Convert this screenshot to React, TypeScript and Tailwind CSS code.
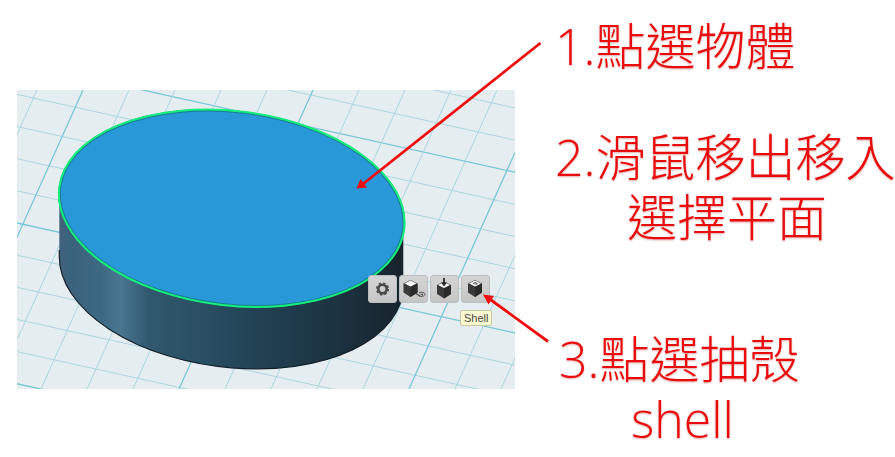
import type { ReactNode } from "react";

const rowLines = Array.from({ length: 15 }, (_, i) => i - 8);
const columnLines = Array.from({ length: 16 }, (_, i) => i);

function Grid() {
  return (
    <g fill="none">
      {rowLines.map((k) => {
        const y = 133 + k * 32.15;
        const major = k % 5 === 0;
        return (
          <path
            key={`r${k}`}
            d={`M0 ${y}L498 ${y + 110}`}
            stroke={major ? "#79c7d9" : "#a9d6e1"}
            strokeWidth={major ? 1.3 : 1}
          />
        );
      })}
      {columnLines.map((k) => {
        const x = 20 + k * 46;
        const major = k % 5 === 1;
        return (
          <path
            key={`c${k}`}
            d={`M${x} 0L${x - 134} 299`}
            stroke={major ? "#79c7d9" : "#a9d6e1"}
            strokeWidth={major ? 1.3 : 1}
          />
        );
      })}
    </g>
  );
}

function Scene() {
  return (
    <svg viewBox="0 0 498 299" className="block w-full bg-[#e6edf1]" role="img" aria-label="Cylinder">
      <defs>
        <linearGradient id="side" gradientUnits="userSpaceOnUse" x1="42" y1="0" x2="386" y2="0">
          <stop offset="0" stopColor="#43627a" />
          <stop offset="0.03" stopColor="#3b627d" />
          <stop offset="0.12" stopColor="#3d6883" />
          <stop offset="0.18" stopColor="#4a7692" />
          <stop offset="0.26" stopColor="#30596f" />
          <stop offset="0.42" stopColor="#294e62" />
          <stop offset="0.6" stopColor="#214052" />
          <stop offset="0.8" stopColor="#1c3341" />
          <stop offset="1" stopColor="#17242d" />
        </linearGradient>
      </defs>
      <Grid />
      <path d="M42.3 110V167A172.8 96 6.85 0 0 386.3 195.6V130Z" fill="url(#side)" />
      <path d="M42.3 160V167A172.8 96 6.85 0 0 386.3 195.6" fill="none" stroke="#14202a" strokeWidth="1.2" />
      <ellipse
        cx="214.7"
        cy="118.3"
        rx="173"
        ry="96.5"
        transform="rotate(6.85 214.7 118.3)"
        fill="#2898d8"
        stroke="#167f91"
        strokeWidth="2.6"
      />
      <ellipse
        cx="214.7"
        cy="118.3"
        rx="173.7"
        ry="97.2"
        transform="rotate(6.85 214.7 118.3)"
        fill="none"
        stroke="#17ee7c"
        strokeWidth="2"
      />
    </svg>
  );
}

function Arrows() {
  return (
    <svg
      viewBox="0 0 498 299"
      className="pointer-events-none absolute inset-0 size-full overflow-visible"
      aria-hidden="true"
    >
      <g stroke="#ee0d0d" strokeWidth="2.8" fill="#ee0d0d">
        <path d="M523.5 -47L346 94" />
        <path d="M531 251.5L474 210" />
        <path d="M339.5 98.5L343.5 89L350 97.5Z" stroke="none" />
        <path d="M466 204.5L477 206L471.5 214.5Z" stroke="none" />
      </g>
    </svg>
  );
}

function Cube({ children }: { children?: ReactNode }) {
  return (
    <>
      <path d="M7 8.5L14 5L21 8.5V17.5L14 22L7 17.5Z" fill="#3a3a3a" />
      <path d="M14 12L21 8.5V17.5L14 22Z" fill="#2b2b2b" />
      <path d="M8 8.5L14 5.5L20 8.5L14 11.5Z" fill="#fafafa" />
      {children}
    </>
  );
}

function ToolButton({ label, children }: { label: string; children: ReactNode }) {
  return (
    <button
      type="button"
      aria-label={label}
      className="h-7 w-[29px] rounded-[3px] border border-[#bcbec0] bg-linear-to-b from-[#d4d4d5] to-[#c6c6c7]"
    >
      <svg viewBox="1 1 27 26" className="block size-full" fill="none">
        {children}
      </svg>
    </button>
  );
}

function Toolbar() {
  return (
    <div className="absolute top-[185px] left-[351px] flex gap-[2px]">
      <ToolButton label="Settings">
        <circle cx="14.5" cy="14" r="4.2" stroke="#484848" strokeWidth="2.6" />
        <circle cx="14.5" cy="14" r="5.8" stroke="#484848" strokeWidth="1.6" strokeDasharray="2.28 2.28" />
      </ToolButton>
      <ToolButton label="Move">
        <g transform="translate(-2.5 0)">
          <Cube />
        </g>
        <path d="M17 18.5L21 21" stroke="#444" strokeWidth="1.4" />
        <path d="M20 17.5C24 16.5 27 18 25.5 20.2C24.5 21.5 22 21.8 20 21.2" stroke="#555" strokeWidth="1" />
        <path d="M20.5 18.8H24V21Z" fill="#555" />
      </ToolButton>
      <ToolButton label="Press/Pull">
        <g transform="translate(0 1.5)">
          <Cube />
        </g>
        <path d="M14 3V9" stroke="#282828" strokeWidth="1.8" />
        <path d="M11 7.5H17L14 11.5Z" fill="#282828" />
      </ToolButton>
      <ToolButton label="Shell">
        <Cube>
          <path d="M11.5 8.5L14 7L17 8.5L14.5 10Z" fill="#444" />
          <path d="M12.5 9L14.5 9.8L15.5 9L14 8.3Z" fill="#fff" />
        </Cube>
      </ToolButton>
    </div>
  );
}

export default function App() {
  return (
    <main className="flex min-h-screen items-start overflow-hidden bg-white">
      <figure className="relative mt-[90px] ml-[17px] w-[498px] shrink-0">
        <Scene />
        <Toolbar />
        <div
          role="tooltip"
          className="absolute top-[220px] left-[443px] rounded-[2px] border border-[#c9c7a5] bg-[#fbf8cf] px-[3px] font-['Liberation_Sans',sans-serif] text-[11px] leading-[14px] text-[#484848]"
        >
          Shell
        </div>
        <Arrows />
      </figure>
      <ol className="min-w-0 flex-1 pt-4 pl-10 font-['Open_Sans','Noto_Sans_CJK_TC',sans-serif] text-[50px] leading-[60px] font-light whitespace-nowrap text-[#e80c0c] [text-shadow:0_1px_2px_#e0a8a8]">
        <li>1.點選物體</li>
        <li className="mt-[51px]">
          2.滑鼠移出移入
          <span className="block pl-[72px]">選擇平面</span>
        </li>
        <li className="mt-[82px] pl-1">
          3.點選抽殼
          <span className="block pl-[72px]">shell</span>
        </li>
      </ol>
    </main>
  );
}
